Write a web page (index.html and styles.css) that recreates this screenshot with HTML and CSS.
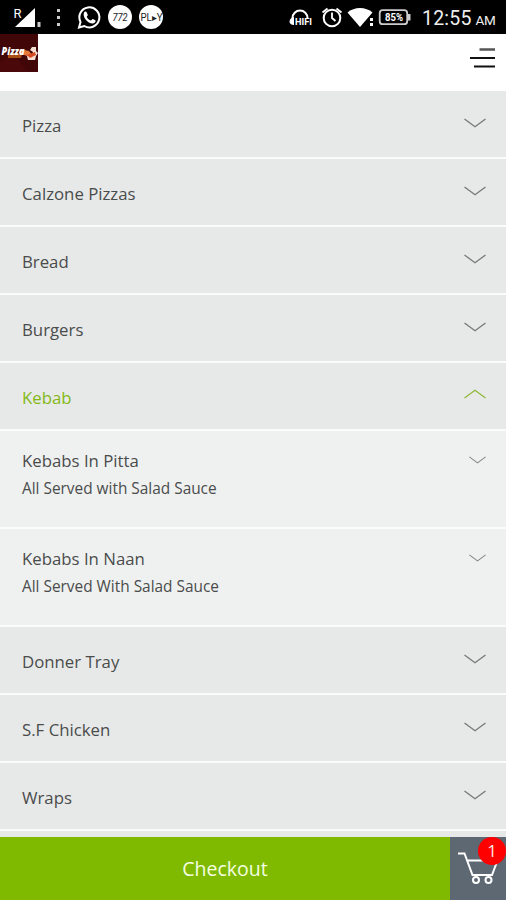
FILE: index.html
```html
<!DOCTYPE html>
<html lang="en">
<head>
<meta charset="utf-8">
<meta name="viewport" content="width=device-width, initial-scale=1">
<title>Menu</title>
<link rel="stylesheet" href="styles.css">
</head>
<body>
<svg class="symbols" aria-hidden="true">
  <symbol id="chevron" viewBox="0 0 22 10"><path d="M.5 1 11 8.8 21.500 1" fill="none" stroke="currentColor" stroke-width="1.300"/></symbol>
</svg>
<div class="screen">
  <div class="status">
    <svg class="status-left" viewBox="0 0 180 34">
      <text x="13.500" y="17.500" font-size="13">R</text>
      <path d="M35 8v19H15z"/>
      <path d="M37.500 22h3v5h-3zM57 9h3v3h-3zM57 16h3v3h-3zM57 23h3v3h-3z" opacity=".8"/>
      <path d="M79 27.500 80.500 22A10 10 0 1 1 84.300 26z" fill="none" stroke="#fff" stroke-width="2"/>
      <path d="M84 12.500c1-1.500 2.500-1 3 .5l.8 2c.2.7-1.300 1.500-1 2 1 1.800 2.200 2.800 4 3.500.7.200 1.400-1.800 2.200-1.400l2.200 1.200c1.200.6-.2 3-2.500 3.200-4.500.3-10.700-6.500-8.700-11z"/>
      <circle cx="120" cy="17" r="12"/><circle cx="151" cy="17" r="12"/>
      <g class="badge-text"><text x="112.500" y="21" font-size="11" textLength="15" lengthAdjust="spacingAndGlyphs" font-style="italic">772</text>
      <text x="140.500" y="21" font-size="10" textLength="22" lengthAdjust="spacingAndGlyphs">PL▸Y</text></g>
    </svg>
    <svg class="status-icons" viewBox="286 0 130 34">
      <path d="M292.500 19v-1a7.500 7.500 0 0 1 15 0v1" fill="none" stroke="#fff" stroke-width="2"/>
      <path d="M294 17v8c-6 0-6-7 0-8z"/>
      <text x="295" y="25" font-size="9" font-weight="700" textLength="17" lengthAdjust="spacingAndGlyphs">HIFI</text>
      <circle cx="332" cy="18" r="8.300" fill="none" stroke="#fff" stroke-width="2"/>
      <path d="M332 12.500V18l3.500 3M322.500 12.500l5-4M341.500 12.500l-5-4" fill="none" stroke="#fff" stroke-width="1.800"/>
      <path d="M347.500 12.500C354 6.500 366 6.500 372.500 12.500L360 27z"/>
      <path d="M370 18h3v3h-3zM370 23h3v3h-3z"/>
      <rect x="379.700" y="10.200" width="27.500" height="14" rx="3" fill="none" stroke="#ccc" stroke-width="1.800"/>
      <path d="M408 14h2.500v6.500H408z" fill="#ccc"/>
      <text x="385" y="21" font-size="10" font-weight="700" textLength="18" lengthAdjust="spacingAndGlyphs">85%</text>
    </svg>
    <span class="clock">12:55<small>AM</small></span>
  </div>
  <header class="header">
    <svg class="logo" viewBox="0 0 38 38">
      <rect width="38" height="38" fill="#4b080a"/>
      <path d="M0 0h38v37H27L13 19 0 28z" fill="#300306" opacity=".35"/>
      <path d="M8 20q6-2 14 0l-1 4H8z" fill="#a94b15"/>
      <path d="M20 15l9 2 3 4-5 1-8-3z" fill="#e5783a"/>
      <path d="M32 13h4v4l2 2-2 3-1 4h-7l-1-4 5-1 1-3-3-2z" fill="#f4dfd2"/>
      <path d="M27 21l8-3 1 3-6 3z" fill="#d84b22"/>
      <text x="1.500" y="21" font-size="10" font-weight="800" font-style="italic" fill="#fff" textLength="23" lengthAdjust="spacingAndGlyphs">Pizza</text>
    </svg>
    <svg class="menu-icon" viewBox="0 0 26 22"><path d="M9.500 2.500H25" stroke="#555" stroke-width="2.500"/><path d="M0 11h25M4 19.500h21" stroke="#111" stroke-width="2.200"/></svg>
  </header>
  <main class="menu">
    <div class="row"><span>Pizza</span><svg class="chevron"><use href="#chevron"/></svg></div>
    <div class="row"><span>Calzone Pizzas</span><svg class="chevron"><use href="#chevron"/></svg></div>
    <div class="row"><span>Bread</span><svg class="chevron"><use href="#chevron"/></svg></div>
    <div class="row"><span>Burgers</span><svg class="chevron"><use href="#chevron"/></svg></div>
    <div class="row open"><span>Kebab</span><svg class="chevron"><use href="#chevron"/></svg></div>
    <div class="subrow"><div><h3>Kebabs In Pitta</h3><p>All Served with Salad Sauce</p></div><svg class="chevron small"><use href="#chevron"/></svg></div>
    <div class="subrow"><div><h3>Kebabs In Naan</h3><p>All Served With Salad Sauce</p></div><svg class="chevron small"><use href="#chevron"/></svg></div>
    <div class="row"><span>Donner Tray</span><svg class="chevron"><use href="#chevron"/></svg></div>
    <div class="row"><span>S.F Chicken</span><svg class="chevron"><use href="#chevron"/></svg></div>
    <div class="row"><span>Wraps</span><svg class="chevron"><use href="#chevron"/></svg></div>
  </main>
  <footer class="footer">
    <div class="checkout">Checkout</div>
    <div class="cart">
      <svg class="cart-icon" viewBox="0 0 42 34" fill="none" stroke="#fff" stroke-width="2">
        <path d="M0 2.500h6.500L14.500 24H34L39.500 9.500H9.500"/>
        <circle cx="18" cy="29" r="3"/><circle cx="30.500" cy="29" r="3"/>
      </svg>
      <span class="count">1</span>
    </div>
  </footer>
</div>
</body>
</html>
```
FILE: styles.css
```css
* { box-sizing: border-box; }
body { margin: 0; font-family: "Open Sans", sans-serif; color: #4a4c4c; }
.symbols { display: none; }
svg { display: block; flex: none; }
.screen { display: flex; flex-direction: column; height: 900px; overflow: hidden; background: #e7e9e8; }
.status { flex: none; display: flex; height: 34px; background: #000; color: #eee; font-family: Roboto, sans-serif; }
.status svg { fill: #fff; height: 34px; }
.status-left { width: 180px; }
.status-icons { width: 130px; margin-left: 106px; }
.badge-text { fill: #222; }
.clock { margin-left: 6px; font-size: 19.5px; line-height: 37px; letter-spacing: .2px; white-space: nowrap; }
.clock small { margin-left: 4px; font-size: 13.5px; letter-spacing: -.4px; }
.header { flex: none; display: flex; justify-content: space-between; height: 56.5px; background: #fff; }
.logo { width: 38px; height: 38px; font-family: "Open Sans", sans-serif; }
.menu-icon { width: 26px; height: 22px; margin: 13px 10px 0 0; }
.menu { flex: 1; min-height: 0; overflow: hidden; }
.row { display: flex; justify-content: space-between; height: 68px; padding: 23px 20px 0 22px; border-bottom: 2px solid #fafbfb; font-size: 16.8px; line-height: 24px; background: #e7e9e8; }
.row.open { color: #83b817; }
.chevron { width: 22px; height: 10px; margin-top: 4px; color: #777; }
.open .chevron { margin-top: 3px; transform: scaleY(-1); color: #91b83c; }
.subrow { display: flex; justify-content: space-between; height: 98px; padding: 18px 20px 0 22px; border-bottom: 2px solid #fafbfb; background: #eff1f0; }
.subrow h3 { margin: 0; font-size: 16.8px; line-height: 24px; font-weight: 400; }
.subrow p { margin: 5px 0 0; font-size: 15.4px; line-height: 22px; }
.chevron.small { width: 17px; height: 8px; margin-top: 7px; color: #858787; }
.footer { flex: none; display: flex; height: 63px; }
.checkout { flex: 1; background: #7fba00; color: #f4ffe0; text-align: center; font-size: 19.5px; line-height: 63px; }
.cart { position: relative; width: 56px; background: #5e6872; }
.cart-icon { width: 42px; height: 34px; margin: 14px 0 0 8px; }
.count { position: absolute; top: 0; right: 0; width: 28px; height: 28px; border-radius: 50%; background: #f00; color: #ffe4e4; text-align: center; font-size: 17px; line-height: 28px; }
```
